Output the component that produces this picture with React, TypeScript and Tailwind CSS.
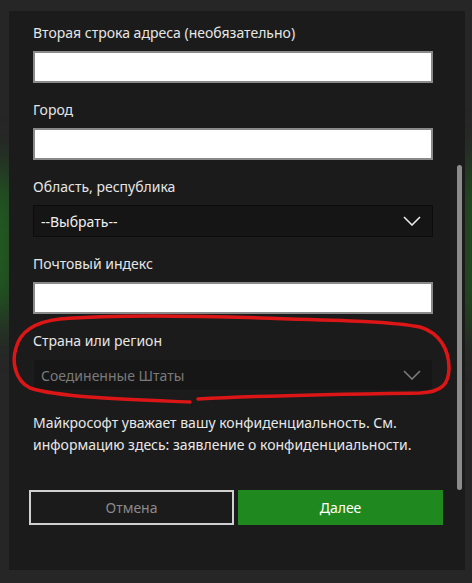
import * as React from 'react';

const font = { fontFamily: '"Noto Sans", "Liberation Sans", sans-serif' };

function Chevron({ color }: { color: string }) {
    return (
        <svg width="18" height="10" viewBox="0 0 18 10" fill="none">
            <polyline points="1,1 9,9 17,1" stroke={color} strokeWidth="1.6" />
        </svg>
    );
}

function TextField({ label }: { label: string }) {
    return (
        <div className="flex flex-col gap-2">
            <div className="h-5 text-[14px] leading-5 text-[#e6e6e6]">{label}</div>
            <div className="h-8 w-[400px] border-2 border-[#8a8a8a] bg-white" />
        </div>
    );
}

function SelectField({ label, value, disabled }: { label: string; value: string; disabled?: boolean }) {
    return (
        <div className="flex flex-col gap-2">
            <div className="h-5 text-[14px] leading-5 text-[#e6e6e6]">{label}</div>
            <div
                className={
                    disabled
                        ? 'flex h-8 w-[400px] items-center justify-between border border-[#1c1c1c] bg-[#161616] pl-[7px] pr-[11px]'
                        : 'flex h-8 w-[400px] items-center justify-between border border-[#0c0c0c] bg-[#151515] pl-[7px] pr-[11px]'
                }
            >
                <span className={disabled ? 'text-[14px] text-[#7a7a7a]' : 'text-[14px] text-[#f0f0f0]'}>{value}</span>
                <Chevron color={disabled ? '#7a7a7a' : '#e8e8e8'} />
            </div>
        </div>
    );
}

export default function App() {
    return (
        <div className="relative h-[583px] w-[472px] overflow-hidden bg-[#262626]" style={font}>
            <div className="absolute left-[-30px] top-[170px] h-[150px] w-[50px] rounded-full bg-[#1f6a1f] blur-xl" />
            <div className="absolute right-[-30px] top-[160px] h-[170px] w-[45px] rounded-full bg-[#1f5a1f] blur-xl" />

            <div className="relative ml-[9px] mt-[11px] h-[559px] w-[456px] bg-[#1b1b1b]">
                <div className="flex flex-col gap-[17px] px-6 pt-3">
                    <TextField label="Вторая строка адреса (необязательно)" />
                    <TextField label="Город" />
                    <SelectField label="Область, республика" value="--Выбрать--" />
                    <TextField label="Почтовый индекс" />
                    <SelectField label="Страна или регион" value="Соединенные Штаты" disabled />
                </div>

                <p className="mt-[21px] px-6 text-[14px] leading-[22px] text-[#e8e8e8]">
                    Майкрософт уважает вашу конфиденциальность. См.
                    <br />
                    информацию здесь: заявление о конфиденциальности.
                </p>

                <div className="mt-[34px] flex gap-1 px-5">
                    <button className="flex h-[35px] w-[205px] items-center justify-center border-2 border-[#d0d0d0] bg-[#1b1b1b] text-[14px] text-[#8a8a8a]">
                        Отмена
                    </button>
                    <button className="flex h-[35px] w-[205px] items-center justify-center bg-[#1f891f] text-[14px] text-white">
                        Далее
                    </button>
                </div>

                <div className="absolute left-[448px] top-[154px] h-[325px] w-[5px] rounded-full bg-[#8c8c8c]" />
            </div>

            <svg className="pointer-events-none absolute left-0 top-0" width="472" height="583" viewBox="0 0 472 583" fill="none">
                <path
                    d="M190 402 C140 400 60 398 30 388 C14 380 12 360 16 348 C20 332 34 322 60 319 C120 314 200 316 260 318 C330 320 390 321 420 327 C440 333 449 350 449 368 C449 384 442 392 420 393 C350 394 270 395 198 399"
                    stroke="#dc1616"
                    strokeWidth="3.5"
                    strokeLinecap="round"
                />
            </svg>
        </div>
    );
}
